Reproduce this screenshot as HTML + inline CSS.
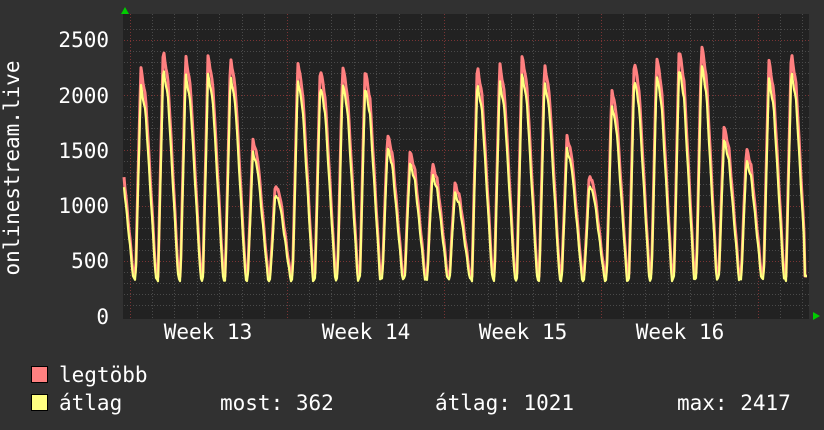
<!DOCTYPE html>
<html><head><meta charset="utf-8"><style>
html,body{margin:0;padding:0;background:#313131;width:824px;height:430px;overflow:hidden}
svg{display:block}
text{font-family:"DejaVu Sans Mono","Liberation Mono",monospace;fill:#fff;font-size:21px}
</style></head><body>
<svg id="s" width="824" height="430" xmlns="http://www.w3.org/2000/svg">
<rect x="0" y="0" width="824" height="430" fill="#313131"/>
<rect x="123" y="14" width="686" height="305" fill="#222"/>
<g id="grid"></g>
<g id="data"></g>
<g text-anchor="end">
<text x="109" y="47">2500</text>
<text x="109" y="103">2000</text>
<text x="109" y="158">1500</text>
<text x="109" y="213">1000</text>
<text x="109" y="268">500</text>
<text x="109" y="324">0</text>
</g>
<g text-anchor="middle">
<text x="208" y="339">Week 13</text>
<text x="366" y="339">Week 14</text>
<text x="523" y="339">Week 15</text>
<text x="680" y="339">Week 16</text>
</g>
<text transform="translate(19,168) rotate(-90)" text-anchor="middle">onlinestream.live</text>
<rect x="31.5" y="366.5" width="16" height="16" fill="#ff8080" stroke="#000"/>
<rect x="31.5" y="394.5" width="16" height="16" fill="#ffff80" stroke="#000"/>
<text x="59" y="382">legtöbb</text>
<text x="59" y="410">átlag</text>
<text x="220" y="410">most: 362</text>
<text x="435" y="410">átlag: 1021</text>
<text x="677" y="410">max: 2417</text>
<polygon points="125,7 129,14 121,14" fill="#0c0"/>
<polygon points="820,316 813,312 813,320" fill="#0c0"/>
</svg>
<script>
var g=document.getElementById('grid'),d=document.getElementById('data'),ns="http://www.w3.org/2000/svg";
function ln(x1,y1,x2,y2,c){var l=document.createElementNS(ns,'line');l.setAttribute('x1',x1);l.setAttribute('y1',y1);l.setAttribute('x2',x2);l.setAttribute('y2',y2);l.setAttribute('stroke',c);l.setAttribute('stroke-dasharray','1,2');g.appendChild(l);}
for(var v=100;v<=2600;v+=100){var y=Math.round(316-v*0.1104)+0.5;ln(124,y,809,y,v%500==0?'#7a3434':'#4a4a4a');}
for(var i=0;i<31;i++){var x=Math.round(129.5+i*22.43)+0.5;if(x>809)break;ln(x,14,x,318,'#4a4a4a');}
[130,287,444,601,758].forEach(function(x){ln(x+0.5,14,x+0.5,318,'#7a3434');});
var peaks=[1500,2250,2420,2360,2370,2350,1600,1200,2310,2260,2280,2240,1650,1490,1380,1200,2270,2290,2370,2290,1630,1290,2060,2330,2360,2430,2470,1720,1520,2320,2390,900];
function val(x,avg){var t=(x-134.5)/22.43+1;var i=Math.floor(t),f=t-i;if(i<0){i=0;f=0}
var p=peaks[Math.min(i,peaks.length-1)];var base=avg?330:370;
var s;if(f<0.05)s=0;else if(f<0.28)s=(f-0.05)/0.23;else if(f<0.5)s=1-(f-0.28)/0.22*0.15;else if(f<0.95)s=0.85-(f-0.5)/0.45*0.85;else s=0;
s=Math.max(0,Math.min(1,s));var pk=avg?p*0.93:p;var n=Math.sin(x*1.7)*15;return base+n+(pk-base)*s;}
function path(avg){var p='';for(var x=124;x<=807;x++){var v=val(x,avg);if(x>804)v=362;var y=316-v*0.1104;p+=(x==124?'M':'L')+x+','+y.toFixed(1);}return p;}
[[false,'#ff8080',3],[true,'#ffff80',2.2]].forEach(function(a){var e=document.createElementNS(ns,'path');e.setAttribute('d',path(a[0]));e.setAttribute('fill','none');e.setAttribute('stroke',a[1]);e.setAttribute('stroke-width',a[2]);e.setAttribute('stroke-linejoin','round');d.appendChild(e);});
</script>
</body></html>
